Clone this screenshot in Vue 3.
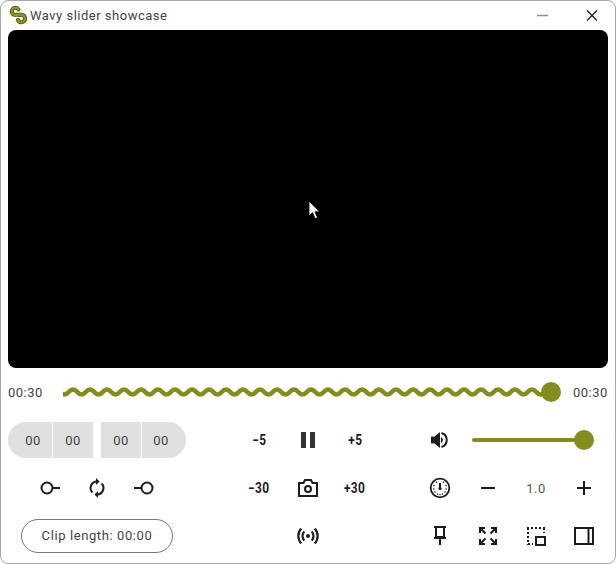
<script setup>
const period = 17
const offset = 5.75
let d = `M${(offset - period).toFixed(2)} 12`
for (let i = -1; i < 29; i++) {
  const x = i * period + offset
  d += ` Q${(x + period / 4).toFixed(2)} 7 ${(x + period / 2).toFixed(2)} 12 T${(x + period).toFixed(2)} 12`
}
const wave = d
</script>

<template>
  <div class="window">
    <header class="titlebar">
      <svg class="logo" width="20" height="20" viewBox="0 0 20 20" fill="none">
        <path d="M10.500 4.500A3.600 3.600 0 1 0 6.500 9.800H12" stroke="#4f5212" stroke-width="4" stroke-linecap="round" />
        <path d="M12 9.800h1.500a3.700 3.700 0 1 1-3.600 5" stroke="#4f5212" stroke-width="4" stroke-linecap="round" />
        <path d="M10.500 4.500A3.600 3.600 0 1 0 6.500 9.800H12" stroke="#8a9420" stroke-width="2.400" stroke-linecap="round" stroke-dasharray="3 1" />
        <path d="M12 9.800h1.500a3.700 3.700 0 1 1-3.600 5" stroke="#8a9420" stroke-width="2.400" stroke-linecap="round" stroke-dasharray="3 1" />
      </svg>
      <span class="title">Wavy slider showcase</span>
      <div class="winbtns">
        <svg width="48" height="29" viewBox="0 0 48 29"><path d="M18 14.500h11" stroke="#8f8f8f" stroke-width="1.600" /></svg>
        <svg width="48" height="29" viewBox="0 0 48 29"><path d="M20 9.500l10 10M30 9.500l-10 10" stroke="#1c1c1c" stroke-width="1.300" /></svg>
      </div>
    </header>

    <div class="video">
      <svg class="cursor" width="14" height="20" viewBox="0 0 14 20">
        <path d="M1 1v15l3.500-3.400 2.600 6 2.400-1-2.600-5.800H11.500z" fill="#fff" stroke="#000" stroke-width=".8" />
      </svg>
    </div>

    <div class="seek">
      <span class="time">00:30</span>
      <svg class="wave" width="498" height="24" viewBox="0 0 498 24" fill="none">
        <clipPath id="wclip"><rect x="0" y="0" width="488" height="24" /></clipPath>
        <path :d="wave" stroke="#848c20" stroke-width="4.500" clip-path="url(#wclip)" />
        <circle cx="488" cy="12" r="10" fill="#848c20" />
      </svg>
      <span class="time end">00:30</span>
    </div>

    <section class="row">
      <div class="pill">
        <span class="seg first">00</span>
        <span class="seg">00</span>
        <span class="seg apart">00</span>
        <span class="seg last">00</span>
      </div>
      <div class="cells">
        <span class="cell jump"><b>−5</b></span>
        <span class="cell">
          <svg width="24" height="24" viewBox="-1 0 24 24"><rect x="5" y="4" width="5" height="16" fill="#333" /><rect x="14" y="4" width="5" height="16" fill="#333" /></svg>
        </span>
        <span class="cell jump"><b>+5</b></span>
      </div>
      <div class="cells right">
        <span class="cell">
          <svg width="24" height="24" viewBox="0 0 24 24" fill="none">
            <path d="M3 8.500h3.500L12 4v16l-5.500-4.500H3z" fill="#1c1c1c" />
            <path d="M13 9a3.300 3.300 0 0 1 0 6z" fill="#1c1c1c" />
            <path d="M13.500 5a7.300 7.300 0 0 1 0 14" stroke="#1c1c1c" stroke-width="2" />
          </svg>
        </span>
        <div class="volume"><i class="track"></i><i class="thumb"></i></div>
      </div>
    </section>

    <section class="row">
      <div class="loops">
        <span class="loop">
          <svg width="24" height="24" viewBox="0 0 24 24" fill="none" stroke="#1c1c1c" stroke-width="2"><circle cx="8" cy="12" r="5.500" /><path d="M13 12h8" /></svg>
        </span>
        <span class="loop">
          <svg width="24" height="24" viewBox="0 0 24 24" fill="none" stroke="#1c1c1c" stroke-width="2">
            <path d="M12 5.500a6.500 6.500 0 0 0-4.600 11" />
            <path d="M12 18.500a6.500 6.500 0 0 0 4.600-11" />
            <path d="M11 2l3.500 3.500L11 9" fill="#1c1c1c" stroke="none" />
            <path d="M13 15l-3.500 3.500L13 22" fill="#1c1c1c" stroke="none" />
          </svg>
        </span>
        <span class="loop">
          <svg width="24" height="24" viewBox="0 0 24 24" fill="none" stroke="#1c1c1c" stroke-width="2"><circle cx="16" cy="12" r="5.500" /><path d="M11 12H3" /></svg>
        </span>
      </div>
      <div class="cells">
        <span class="cell jump"><b>−30</b></span>
        <span class="cell">
          <svg width="24" height="24" viewBox="-1 0 24 24" fill="none" stroke="#1c1c1c" stroke-width="2">
            <path d="M3 7h4.500L9 4h6l1.500 3H21v13H3z" />
            <circle cx="12" cy="13" r="3" />
          </svg>
        </span>
        <span class="cell jump"><b>+30</b></span>
      </div>
      <div class="cells right">
        <span class="cell">
          <svg width="24" height="24" viewBox="0 0 24 24" fill="none" stroke="#1c1c1c">
            <circle cx="12" cy="12" r="9.300" stroke-width="1.800" />
            <path d="M12 7v5" stroke-width="2" />
            <circle cx="12" cy="12.500" r="1.600" fill="#1c1c1c" stroke="none" />
            <path d="M6 9.500h.01M5.700 13h.01M7 16h.01M9.500 18h.01M12 18.500h.01M14.500 18h.01M17 16h.01M18.300 13h.01M18 9.500h.01M8.500 6.300h.01M15.500 6.300h.01" stroke-width="1.600" stroke-linecap="round" />
          </svg>
        </span>
        <span class="cell">
          <svg width="24" height="24" viewBox="0 0 24 24"><path d="M5 12h14" stroke="#1c1c1c" stroke-width="2" /></svg>
        </span>
        <span class="cell rate">1.0</span>
        <span class="cell">
          <svg width="24" height="24" viewBox="0 0 24 24"><path d="M5 12h14M12 5v14" stroke="#1c1c1c" stroke-width="2" /></svg>
        </span>
      </div>
    </section>

    <section class="row">
      <div class="clipwrap"><span class="clip">Clip length: 00:00</span></div>
      <div class="cells">
        <span class="cell"></span>
        <span class="cell">
          <svg width="24" height="24" viewBox="-1 0 24 24" fill="none" stroke="#1c1c1c" stroke-width="2.200">
            <circle cx="12" cy="12" r="2" fill="#1c1c1c" stroke="none" />
            <path d="M8.300 7.500a6.500 6.500 0 0 0 0 9M15.700 7.500a6.500 6.500 0 0 1 0 9" />
            <path d="M5.300 4.500a11 11 0 0 0 0 15M18.700 4.500a11 11 0 0 1 0 15" />
          </svg>
        </span>
        <span class="cell"></span>
      </div>
      <div class="cells right">
        <span class="cell">
          <svg width="24" height="24" viewBox="0 0 24 24" fill="none" stroke="#1c1c1c" stroke-width="2">
            <path d="M6 3h12M8 3v10h8V3M6 14h12M12 14v7" />
          </svg>
        </span>
        <span class="cell">
          <svg width="24" height="24" viewBox="0 0 24 24" fill="none" stroke="#1c1c1c" stroke-width="2">
            <path d="M9 4H4v5M4 4l5.500 5.500M15 4h5v5M20 4l-5.500 5.500M9 20H4v-5M4 20l5.500-5.500M15 20h5v-5M20 20l-5.500-5.500" />
          </svg>
        </span>
        <span class="cell">
          <svg width="24" height="24" viewBox="0 0 24 24" fill="none" stroke="#1c1c1c">
            <path d="M3 4h18M4 4v17M20 4v5M4 20h5" stroke-width="2" stroke-dasharray="2 2" />
            <rect x="12" y="13" width="9" height="8" stroke-width="2" />
          </svg>
        </span>
        <span class="cell">
          <svg width="24" height="24" viewBox="0 0 24 24" fill="none" stroke="#1c1c1c" stroke-width="2">
            <rect x="3" y="4" width="18" height="16" />
            <path d="M16.500 4v16" />
          </svg>
        </span>
      </div>
    </section>
  </div>
</template>

<style scoped>
.window {
  width: 616px;
  height: 564px;
  box-sizing: border-box;
  border: 1px solid #a9a9a9;
  border-radius: 8px;
  background: #fff;
  overflow: hidden;
  font-family: Roboto, "Liberation Sans", sans-serif;
  color: #444;
  font-size: 13px;
  letter-spacing: 0.5px;
}
.titlebar {
  height: 29px;
  display: flex;
  align-items: center;
  padding-left: 7px;
}
.logo {
  margin-top: -1px;
  flex: none;
}
.title {
  margin-left: 2px;
  margin-top: -1px;
  letter-spacing: 0.5px;
}
.winbtns {
  margin-left: auto;
  display: flex;
}
.video {
  position: relative;
  width: 600px;
  height: 338px;
  margin-left: 7px;
  background: #000;
  border-radius: 8px;
}
.cursor {
  position: absolute;
  left: 300px;
  top: 170px;
}
.seek {
  height: 48px;
  display: grid;
  grid-template-columns: 55px 498px 1fr;
  align-items: center;
  padding-left: 7px;
}
.time {
  white-space: nowrap;
}
.end {
  margin-left: 12px;
}
.wave {
  display: block;
}
.row {
  height: 48px;
  display: grid;
  grid-template-columns: 227px 144px 229px;
  align-items: center;
  padding-left: 7px;
}
.pill {
  display: flex;
  width: 178px;
  height: 36px;
}
.seg {
  display: flex;
  align-items: center;
  justify-content: center;
  width: 40px;
  background: #e0e0e0;
  margin-right: 1px;
}
.first {
  width: 44px;
  padding-left: 6px;
  box-sizing: border-box;
  border-radius: 18px 0 0 18px;
}
.apart {
  margin-left: 7px;
}
.last {
  width: 44px;
  padding-right: 6px;
  box-sizing: border-box;
  margin-right: 0;
  border-radius: 0 18px 18px 0;
}
.cells {
  display: flex;
  height: 48px;
}
.right {
  margin-left: 37px;
  width: 192px;
}
.cell {
  flex: none;
  width: 48px;
  height: 48px;
  display: flex;
  align-items: center;
  justify-content: center;
}
.jump b {
  display: inline-block;
  font-size: 14px;
  font-weight: 700;
  letter-spacing: 0.5px;
  color: #1c1c1c;
  transform: scaleX(0.85);
}
.rate {
  color: #555;
}
.volume {
  position: relative;
  width: 122px;
  margin-left: 8px;
  height: 48px;
}
.track {
  position: absolute;
  left: 0;
  right: 10px;
  top: 22px;
  height: 4px;
  border-radius: 2px;
  background: #848c20;
}
.thumb {
  position: absolute;
  right: 0;
  top: 14px;
  width: 20px;
  height: 20px;
  border-radius: 50%;
  background: #848c20;
}
.loops {
  display: flex;
  width: 178px;
  padding-left: 31px;
  box-sizing: border-box;
  gap: 22px;
}
.loop {
  display: flex;
  width: 24px;
  height: 24px;
}
.clipwrap {
  padding-left: 13px;
}
.clip {
  display: flex;
  align-items: center;
  justify-content: center;
  box-sizing: border-box;
  width: 152px;
  height: 34px;
  padding-bottom: 1px;
  border: 1px solid #777;
  border-radius: 17px;
  white-space: nowrap;
  letter-spacing: 0.6px;
}
</style>
